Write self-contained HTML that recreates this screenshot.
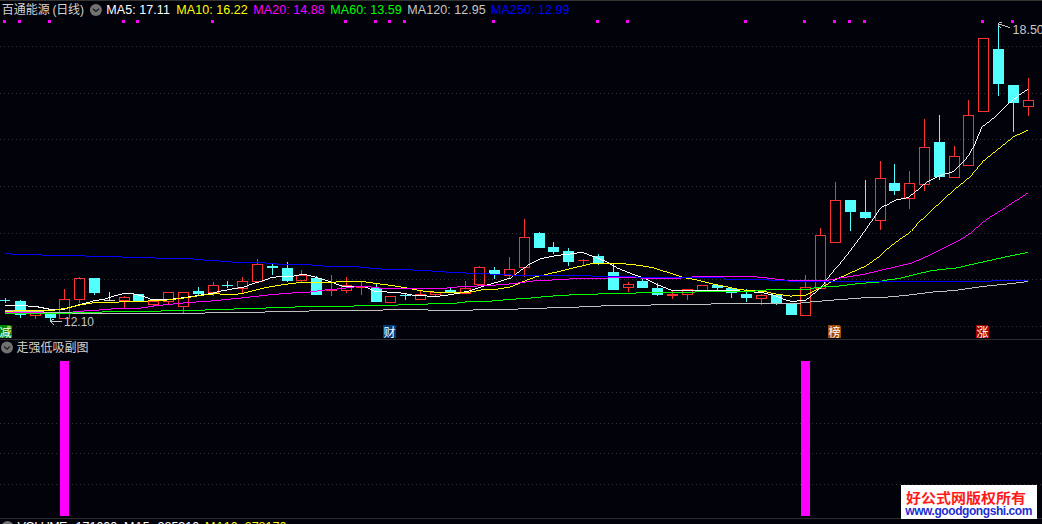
<!DOCTYPE html>
<html><head><meta charset="utf-8"><title>chart</title>
<style>
html,body{margin:0;padding:0;background:#02020b;}
body{width:1042px;height:524px;overflow:hidden;position:relative;font-family:"Liberation Sans","Noto Sans CJK SC",sans-serif;}
.t{position:absolute;white-space:nowrap;line-height:1;font-size:12.5px;}
.cj{font-size:12px;}
.lb{position:absolute;width:13px;height:13px;top:325px;color:#fff;font-size:12px;line-height:13px;text-align:center;font-family:"Noto Sans CJK SC","WenQuanYi Zen Hei",sans-serif;}
</style></head><body>
<svg width="1042" height="524" viewBox="0 0 1042 524" style="position:absolute;left:0;top:0" shape-rendering="crispEdges">
<rect width="1042" height="524" fill="#02020b"/>
<rect x="0" y="0" width="1042" height="1" fill="#343432"/>
<defs><pattern id="dot" width="4" height="1" patternUnits="userSpaceOnUse"><rect width="1" height="1" fill="#353535"/></pattern></defs>
<rect x="0" y="46" width="1042" height="1" fill="url(#dot)"/>
<rect x="0" y="93" width="1042" height="1" fill="url(#dot)"/>
<rect x="0" y="139" width="1042" height="1" fill="url(#dot)"/>
<rect x="0" y="186" width="1042" height="1" fill="url(#dot)"/>
<rect x="0" y="233" width="1042" height="1" fill="url(#dot)"/>
<rect x="0" y="279" width="1042" height="1" fill="url(#dot)"/>
<rect x="0" y="326" width="1042" height="1" fill="url(#dot)"/>
<rect x="0" y="392" width="1042" height="1" fill="url(#dot)"/>
<rect x="0" y="423" width="1042" height="1" fill="url(#dot)"/>
<rect x="0" y="453" width="1042" height="1" fill="url(#dot)"/>
<rect x="0" y="484" width="1042" height="1" fill="url(#dot)"/>
<rect x="0" y="339" width="1042" height="1" fill="#2c2c2c"/>
<rect x="0" y="518" width="1042" height="1" fill="#2c2c2c"/>
<rect x="3" y="20" width="3" height="3" fill="#ff00ff"/>
<rect x="18" y="20" width="3" height="3" fill="#ff00ff"/>
<rect x="48" y="20" width="3" height="3" fill="#ff00ff"/>
<rect x="122" y="20" width="3" height="3" fill="#ff00ff"/>
<rect x="136" y="20" width="3" height="3" fill="#ff00ff"/>
<rect x="211" y="20" width="3" height="3" fill="#ff00ff"/>
<rect x="344" y="20" width="3" height="3" fill="#ff00ff"/>
<rect x="374" y="20" width="3" height="3" fill="#ff00ff"/>
<rect x="388" y="20" width="3" height="3" fill="#ff00ff"/>
<rect x="403" y="20" width="3" height="3" fill="#ff00ff"/>
<rect x="492" y="20" width="3" height="3" fill="#ff00ff"/>
<rect x="596" y="20" width="3" height="3" fill="#ff00ff"/>
<rect x="626" y="20" width="3" height="3" fill="#ff00ff"/>
<rect x="744" y="20" width="3" height="3" fill="#ff00ff"/>
<rect x="803" y="20" width="3" height="3" fill="#ff00ff"/>
<rect x="833" y="20" width="3" height="3" fill="#ff00ff"/>
<rect x="848" y="20" width="3" height="3" fill="#ff00ff"/>
<rect x="863" y="20" width="3" height="3" fill="#ff00ff"/>
<rect x="981" y="20" width="3" height="3" fill="#ff00ff"/>
<rect x="1011" y="20" width="3" height="3" fill="#ff00ff"/>
<rect x="5" y="298" width="1" height="5" fill="#54ffff"/>
<rect x="0" y="300" width="10" height="1" fill="#54ffff"/>
<rect x="20" y="300" width="1" height="18" fill="#54ffff"/>
<rect x="15" y="301" width="11" height="14" fill="#54ffff"/>
<rect x="35" y="316" width="1" height="3" fill="#ff3232"/>
<rect x="30.5" y="312.5" width="10" height="3" fill="none" stroke="#ff3232" stroke-width="1"/>
<rect x="50" y="314" width="1" height="7" fill="#54ffff"/>
<rect x="45" y="314" width="11" height="4" fill="#54ffff"/>
<rect x="64" y="289" width="1" height="10" fill="#ff3232"/>
<rect x="59.5" y="299.5" width="10" height="19" fill="none" stroke="#ff3232" stroke-width="1"/>
<rect x="79" y="277" width="1" height="1" fill="#ff3232"/>
<rect x="79" y="300" width="1" height="3" fill="#ff3232"/>
<rect x="74.5" y="278.5" width="10" height="21" fill="none" stroke="#ff3232" stroke-width="1"/>
<rect x="94" y="278" width="1" height="17" fill="#54ffff"/>
<rect x="89" y="278" width="11" height="15" fill="#54ffff"/>
<rect x="109" y="292" width="1" height="9" fill="#d8d8d8"/>
<rect x="104" y="300" width="11" height="1" fill="#d8d8d8"/>
<rect x="124" y="296" width="1" height="1" fill="#ff3232"/>
<rect x="124" y="301" width="1" height="7" fill="#ff3232"/>
<rect x="119.5" y="297.5" width="10" height="3" fill="none" stroke="#ff3232" stroke-width="1"/>
<rect x="138" y="294" width="1" height="7" fill="#54ffff"/>
<rect x="133" y="294" width="11" height="7" fill="#54ffff"/>
<rect x="153" y="305" width="1" height="1" fill="#ff3232"/>
<rect x="148.5" y="301.5" width="10" height="3" fill="none" stroke="#ff3232" stroke-width="1"/>
<rect x="168" y="302" width="1" height="2" fill="#ff3232"/>
<rect x="163.5" y="292.5" width="10" height="9" fill="none" stroke="#ff3232" stroke-width="1"/>
<rect x="183" y="307" width="1" height="6" fill="#ff3232"/>
<rect x="178.5" y="292.5" width="10" height="14" fill="none" stroke="#ff3232" stroke-width="1"/>
<rect x="198" y="287" width="1" height="8" fill="#54ffff"/>
<rect x="193" y="291" width="11" height="3" fill="#54ffff"/>
<rect x="213" y="282" width="1" height="3" fill="#ff3232"/>
<rect x="213" y="293" width="1" height="3" fill="#ff3232"/>
<rect x="208.5" y="285.5" width="10" height="7" fill="none" stroke="#ff3232" stroke-width="1"/>
<rect x="227" y="281" width="1" height="7" fill="#54ffff"/>
<rect x="222" y="285" width="11" height="1" fill="#54ffff"/>
<rect x="242" y="277" width="1" height="4" fill="#ff3232"/>
<rect x="242" y="289" width="1" height="4" fill="#ff3232"/>
<rect x="237.5" y="281.5" width="10" height="7" fill="none" stroke="#ff3232" stroke-width="1"/>
<rect x="257" y="259" width="1" height="5" fill="#ff3232"/>
<rect x="252.5" y="264.5" width="10" height="17" fill="none" stroke="#ff3232" stroke-width="1"/>
<rect x="272" y="264" width="1" height="11" fill="#54ffff"/>
<rect x="267" y="266" width="11" height="2" fill="#54ffff"/>
<rect x="287" y="262" width="1" height="20" fill="#54ffff"/>
<rect x="282" y="268" width="11" height="13" fill="#54ffff"/>
<rect x="301" y="270" width="1" height="5" fill="#ff3232"/>
<rect x="301" y="281" width="1" height="1" fill="#ff3232"/>
<rect x="296.5" y="275.5" width="10" height="5" fill="none" stroke="#ff3232" stroke-width="1"/>
<rect x="316" y="276" width="1" height="19" fill="#54ffff"/>
<rect x="311" y="278" width="11" height="17" fill="#54ffff"/>
<rect x="331" y="275" width="1" height="21" fill="#ff3232"/>
<rect x="326" y="290" width="11" height="1" fill="#ff3232"/>
<rect x="346" y="277" width="1" height="8" fill="#ff3232"/>
<rect x="346" y="291" width="1" height="2" fill="#ff3232"/>
<rect x="341.5" y="285.5" width="10" height="5" fill="none" stroke="#ff3232" stroke-width="1"/>
<rect x="361" y="282" width="1" height="13" fill="#ff3232"/>
<rect x="356" y="287" width="11" height="1" fill="#ff3232"/>
<rect x="376" y="284" width="1" height="18" fill="#54ffff"/>
<rect x="371" y="288" width="11" height="14" fill="#54ffff"/>
<rect x="385.5" y="296.5" width="10" height="6" fill="none" stroke="#ff3232" stroke-width="1"/>
<rect x="405" y="294" width="1" height="6" fill="#54ffff"/>
<rect x="400" y="295" width="11" height="1" fill="#54ffff"/>
<rect x="420" y="291" width="1" height="3" fill="#ff3232"/>
<rect x="415.5" y="294.5" width="10" height="5" fill="none" stroke="#ff3232" stroke-width="1"/>
<rect x="435" y="295" width="1" height="1" fill="#ff3232"/>
<rect x="430.5" y="292.5" width="10" height="2" fill="none" stroke="#ff3232" stroke-width="1"/>
<rect x="450" y="288" width="1" height="5" fill="#54ffff"/>
<rect x="445" y="290" width="11" height="2" fill="#54ffff"/>
<rect x="465" y="281" width="1" height="7" fill="#ff3232"/>
<rect x="460.5" y="288.5" width="10" height="5" fill="none" stroke="#ff3232" stroke-width="1"/>
<rect x="479" y="266" width="1" height="1" fill="#ff3232"/>
<rect x="479" y="285" width="1" height="1" fill="#ff3232"/>
<rect x="474.5" y="267.5" width="10" height="17" fill="none" stroke="#ff3232" stroke-width="1"/>
<rect x="494" y="267" width="1" height="12" fill="#54ffff"/>
<rect x="489" y="270" width="11" height="4" fill="#54ffff"/>
<rect x="509" y="257" width="1" height="12" fill="#ff3232"/>
<rect x="509" y="276" width="1" height="2" fill="#ff3232"/>
<rect x="504.5" y="269.5" width="10" height="6" fill="none" stroke="#ff3232" stroke-width="1"/>
<rect x="524" y="219" width="1" height="18" fill="#ff3232"/>
<rect x="524" y="268" width="1" height="9" fill="#ff3232"/>
<rect x="519.5" y="237.5" width="10" height="30" fill="none" stroke="#ff3232" stroke-width="1"/>
<rect x="539" y="232" width="1" height="16" fill="#54ffff"/>
<rect x="534" y="233" width="11" height="15" fill="#54ffff"/>
<rect x="553" y="242" width="1" height="12" fill="#54ffff"/>
<rect x="548" y="247" width="11" height="5" fill="#54ffff"/>
<rect x="568" y="248" width="1" height="18" fill="#54ffff"/>
<rect x="563" y="251" width="11" height="11" fill="#54ffff"/>
<rect x="583" y="259" width="1" height="6" fill="#ff3232"/>
<rect x="578" y="260" width="11" height="1" fill="#ff3232"/>
<rect x="598" y="254" width="1" height="11" fill="#54ffff"/>
<rect x="593" y="256" width="11" height="7" fill="#54ffff"/>
<rect x="613" y="264" width="1" height="26" fill="#54ffff"/>
<rect x="608" y="272" width="11" height="18" fill="#54ffff"/>
<rect x="628" y="282" width="1" height="2" fill="#ff3232"/>
<rect x="628" y="288" width="1" height="4" fill="#ff3232"/>
<rect x="623.5" y="284.5" width="10" height="3" fill="none" stroke="#ff3232" stroke-width="1"/>
<rect x="642" y="277" width="1" height="11" fill="#54ffff"/>
<rect x="637" y="281" width="11" height="7" fill="#54ffff"/>
<rect x="657" y="283" width="1" height="13" fill="#54ffff"/>
<rect x="652" y="288" width="11" height="7" fill="#54ffff"/>
<rect x="672" y="291" width="1" height="8" fill="#ff3232"/>
<rect x="667" y="294" width="11" height="2" fill="#ff3232"/>
<rect x="687" y="295" width="1" height="5" fill="#ff3232"/>
<rect x="682.5" y="289.5" width="10" height="5" fill="none" stroke="#ff3232" stroke-width="1"/>
<rect x="697.5" y="285.5" width="10" height="5" fill="none" stroke="#ff3232" stroke-width="1"/>
<rect x="717" y="285" width="1" height="5" fill="#54ffff"/>
<rect x="712" y="285" width="11" height="3" fill="#54ffff"/>
<rect x="731" y="288" width="1" height="10" fill="#54ffff"/>
<rect x="726" y="288" width="11" height="5" fill="#54ffff"/>
<rect x="746" y="289" width="1" height="13" fill="#54ffff"/>
<rect x="741" y="294" width="11" height="4" fill="#54ffff"/>
<rect x="761" y="294" width="1" height="1" fill="#ff3232"/>
<rect x="761" y="299" width="1" height="6" fill="#ff3232"/>
<rect x="756.5" y="295.5" width="10" height="3" fill="none" stroke="#ff3232" stroke-width="1"/>
<rect x="776" y="295" width="1" height="10" fill="#54ffff"/>
<rect x="771" y="295" width="11" height="8" fill="#54ffff"/>
<rect x="791" y="304" width="1" height="11" fill="#54ffff"/>
<rect x="786" y="304" width="11" height="11" fill="#54ffff"/>
<rect x="805" y="275" width="1" height="12" fill="#ff3232"/>
<rect x="800.5" y="287.5" width="10" height="28" fill="none" stroke="#ff3232" stroke-width="1"/>
<rect x="820" y="228" width="1" height="7" fill="#ff3232"/>
<rect x="815.5" y="235.5" width="10" height="53" fill="none" stroke="#ff3232" stroke-width="1"/>
<rect x="835" y="182" width="1" height="18" fill="#ff3232"/>
<rect x="830.5" y="200.5" width="10" height="42" fill="none" stroke="#ff3232" stroke-width="1"/>
<rect x="850" y="200" width="1" height="31" fill="#54ffff"/>
<rect x="845" y="200" width="11" height="12" fill="#54ffff"/>
<rect x="865" y="180" width="1" height="39" fill="#54ffff"/>
<rect x="860" y="212" width="11" height="6" fill="#54ffff"/>
<rect x="880" y="161" width="1" height="17" fill="#ff3232"/>
<rect x="880" y="221" width="1" height="9" fill="#ff3232"/>
<rect x="875.5" y="178.5" width="10" height="42" fill="none" stroke="#ff3232" stroke-width="1"/>
<rect x="894" y="164" width="1" height="31" fill="#54ffff"/>
<rect x="889" y="183" width="11" height="8" fill="#54ffff"/>
<rect x="909" y="171" width="1" height="12" fill="#ff3232"/>
<rect x="909" y="199" width="1" height="10" fill="#ff3232"/>
<rect x="904.5" y="183.5" width="10" height="15" fill="none" stroke="#ff3232" stroke-width="1"/>
<rect x="924" y="119" width="1" height="28" fill="#ff3232"/>
<rect x="924" y="185" width="1" height="6" fill="#ff3232"/>
<rect x="919.5" y="147.5" width="10" height="37" fill="none" stroke="#ff3232" stroke-width="1"/>
<rect x="939" y="115" width="1" height="65" fill="#54ffff"/>
<rect x="934" y="142" width="11" height="35" fill="#54ffff"/>
<rect x="954" y="146" width="1" height="10" fill="#ff3232"/>
<rect x="949.5" y="156.5" width="10" height="21" fill="none" stroke="#ff3232" stroke-width="1"/>
<rect x="968" y="100" width="1" height="15" fill="#ff3232"/>
<rect x="963.5" y="115.5" width="10" height="50" fill="none" stroke="#ff3232" stroke-width="1"/>
<rect x="978.5" y="38.5" width="10" height="73" fill="none" stroke="#ff3232" stroke-width="1"/>
<rect x="998" y="24" width="1" height="72" fill="#54ffff"/>
<rect x="993" y="49" width="11" height="35" fill="#54ffff"/>
<rect x="1013" y="85" width="1" height="47" fill="#54ffff"/>
<rect x="1008" y="85" width="11" height="18" fill="#54ffff"/>
<rect x="1028" y="78" width="1" height="22" fill="#ff3232"/>
<rect x="1028" y="107" width="1" height="9" fill="#ff3232"/>
<rect x="1023.5" y="100.5" width="10" height="6" fill="none" stroke="#ff3232" stroke-width="1"/>
<path d="M1027 89.5h1M1025 90.5h2M1024 91.5h1M1022 92.5h2M1021 93.5h1M1019 94.5h2M1018 95.5h1M1017 96.5h1M1016 97.5h1M1014 98.5h2M1013 99.5h1M1012 100.5h1M1011 101.5h1M1009 102.5h2M1008 103.5h1M1007 104.5h1M1006 105.5h1M1005 106.5h1M1004 107.5h1M1003 108.5h1M1002 109.5h1M1001 110.5h1M1000 111.5h1M999 112.5h1M998 113.5h1M997 114.5h1M996 115.5h1M995 116.5h1M994 117.5h1M992 118.5h2M991 119.5h1M990 120.5h1M989 121.5h1M987 122.5h2M986 123.5h1M985 124.5h1M983 125.5h2M982 126.5h1M981 127.5h1M981 128.5h1M980 129.5h1M980 130.5h1M980 131.5h1M979 132.5h1M979 133.5h1M978 134.5h1M978 135.5h1M977 136.5h1M977 137.5h1M977 138.5h1M976 139.5h1M976 140.5h1M975 141.5h1M975 142.5h1M975 143.5h1M974 144.5h1M974 145.5h1M973 146.5h1M973 147.5h1M972 148.5h1M971 149.5h1M971 150.5h1M970 151.5h1M970 152.5h1M969 153.5h1M969 154.5h1M968 155.5h1M967 156.5h1M966 157.5h1M966 158.5h1M965 159.5h1M964 160.5h1M963 161.5h1M962 162.5h1M961 163.5h1M960 164.5h1M959 165.5h1M958 166.5h1M957 167.5h1M956 168.5h1M955 169.5h1M954 170.5h1M952 171.5h2M949 172.5h3M945 173.5h4M942 174.5h3M939 175.5h3M937 176.5h2M935 177.5h2M933 178.5h2M931 179.5h2M929 180.5h2M927 181.5h2M926 182.5h1M925 183.5h1M923 184.5h2M922 185.5h1M921 186.5h1M920 187.5h1M919 188.5h1M918 189.5h1M916 190.5h2M915 191.5h1M914 192.5h1M913 193.5h1M911 194.5h2M910 195.5h1M909 196.5h1M906 197.5h3M901 198.5h5M896 199.5h5M894 200.5h2M892 201.5h2M890 202.5h2M889 203.5h1M887 204.5h2M884 205.5h3M882 206.5h2M881 207.5h1M880 208.5h1M879 209.5h1M878 210.5h1M878 211.5h1M877 212.5h1M876 213.5h1M876 214.5h1M875 215.5h1M874 216.5h1M874 217.5h1M873 218.5h1M872 219.5h1M872 220.5h1M871 221.5h1M870 222.5h1M869 223.5h1M869 224.5h1M868 225.5h1M867 226.5h1M867 227.5h1M866 228.5h1M865 229.5h1M865 230.5h1M864 231.5h1M863 232.5h1M862 233.5h1M862 234.5h1M861 235.5h1M860 236.5h1M860 237.5h1M859 238.5h1M858 239.5h1M857 240.5h1M857 241.5h1M856 242.5h1M855 243.5h1M854 244.5h1M854 245.5h1M853 246.5h1M852 247.5h1M851 248.5h1M851 249.5h1M850 250.5h1M849 251.5h1M577 252.5h7M848 252.5h1M570 253.5h7M584 253.5h3M848 253.5h1M561 254.5h9M587 254.5h2M847 254.5h1M554 255.5h7M589 255.5h3M846 255.5h1M549 256.5h5M592 256.5h3M845 256.5h1M544 257.5h5M595 257.5h2M844 257.5h1M540 258.5h4M597 258.5h3M844 258.5h1M538 259.5h2M600 259.5h2M843 259.5h1M536 260.5h2M602 260.5h3M842 260.5h1M534 261.5h2M605 261.5h2M841 261.5h1M532 262.5h2M607 262.5h2M840 262.5h1M530 263.5h2M609 263.5h1M840 263.5h1M528 264.5h2M610 264.5h2M839 264.5h1M527 265.5h1M612 265.5h2M838 265.5h1M526 266.5h1M614 266.5h2M837 266.5h1M524 267.5h2M616 267.5h1M836 267.5h1M523 268.5h1M617 268.5h3M835 268.5h1M521 269.5h2M620 269.5h2M834 269.5h1M520 270.5h1M622 270.5h3M833 270.5h1M519 271.5h1M625 271.5h2M833 271.5h1M517 272.5h2M627 272.5h3M832 272.5h1M516 273.5h1M630 273.5h2M831 273.5h1M299 274.5h8M515 274.5h1M632 274.5h3M830 274.5h1M294 275.5h5M307 275.5h4M513 275.5h2M635 275.5h3M829 275.5h1M276 276.5h18M311 276.5h4M512 276.5h1M638 276.5h3M829 276.5h1M270 277.5h6M315 277.5h3M511 277.5h1M641 277.5h3M828 277.5h1M268 278.5h2M318 278.5h4M507 278.5h4M644 278.5h2M827 278.5h1M265 279.5h3M322 279.5h3M504 279.5h3M646 279.5h2M826 279.5h1M262 280.5h3M325 280.5h3M501 280.5h3M648 280.5h2M826 280.5h1M259 281.5h3M328 281.5h3M498 281.5h3M650 281.5h2M825 281.5h1M255 282.5h4M331 282.5h3M494 282.5h4M652 282.5h2M824 282.5h1M252 283.5h3M334 283.5h2M491 283.5h3M654 283.5h2M824 283.5h1M249 284.5h3M336 284.5h3M487 284.5h4M656 284.5h2M823 284.5h1M247 285.5h2M339 285.5h3M484 285.5h3M658 285.5h3M822 285.5h1M244 286.5h3M342 286.5h23M481 286.5h3M661 286.5h2M821 286.5h1M238 287.5h6M365 287.5h3M478 287.5h3M663 287.5h3M821 287.5h1M232 288.5h6M368 288.5h2M475 288.5h3M666 288.5h2M819 288.5h2M227 289.5h5M370 289.5h2M472 289.5h3M668 289.5h3M818 289.5h1M221 290.5h6M372 290.5h2M469 290.5h3M671 290.5h69M817 290.5h1M217 291.5h4M374 291.5h13M464 291.5h5M740 291.5h14M816 291.5h1M213 292.5h4M387 292.5h14M460 292.5h4M754 292.5h10M815 292.5h1M122 293.5h12M208 293.5h5M401 293.5h6M454 293.5h6M764 293.5h4M813 293.5h2M118 294.5h4M134 294.5h4M201 294.5h7M407 294.5h5M448 294.5h6M768 294.5h5M812 294.5h1M114 295.5h4M138 295.5h4M195 295.5h6M412 295.5h15M440 295.5h8M773 295.5h3M811 295.5h1M111 296.5h3M142 296.5h3M188 296.5h7M427 296.5h13M776 296.5h2M810 296.5h1M108 297.5h3M145 297.5h3M181 297.5h7M778 297.5h3M809 297.5h1M105 298.5h3M148 298.5h2M173 298.5h8M781 298.5h2M807 298.5h2M99 299.5h6M150 299.5h23M783 299.5h3M806 299.5h1M93 300.5h6M786 300.5h4M797 300.5h9M90 301.5h3M790 301.5h7M86 302.5h4M82 303.5h4M78 304.5h4M5 305.5h23M75 305.5h3M28 306.5h11M71 306.5h4M38 307.5h6M68 307.5h3M43 308.5h6M65 308.5h3M48 309.5h17" fill="none" stroke="#ffffff" stroke-width="1"/>
<path d="M1026 130.5h2M1024 131.5h2M1022 132.5h2M1020 133.5h2M1017 134.5h3M1015 135.5h2M1013 136.5h2M1012 137.5h1M1011 138.5h1M1010 139.5h1M1008 140.5h2M1007 141.5h1M1006 142.5h1M1005 143.5h1M1003 144.5h2M1002 145.5h1M1001 146.5h1M1000 147.5h1M998 148.5h2M997 149.5h1M996 150.5h1M995 151.5h1M993 152.5h2M992 153.5h1M991 154.5h1M990 155.5h1M988 156.5h2M987 157.5h1M986 158.5h1M985 159.5h1M983 160.5h2M982 161.5h1M982 162.5h1M981 163.5h1M980 164.5h1M979 165.5h1M978 166.5h1M977 167.5h1M977 168.5h1M976 169.5h1M975 170.5h1M974 171.5h1M973 172.5h1M972 173.5h1M972 174.5h1M971 175.5h1M970 176.5h1M969 177.5h1M967 178.5h2M966 179.5h1M965 180.5h1M964 181.5h1M963 182.5h1M961 183.5h2M960 184.5h1M959 185.5h1M958 186.5h1M956 187.5h2M955 188.5h1M954 189.5h1M953 190.5h1M952 191.5h1M951 192.5h1M950 193.5h1M948 194.5h2M947 195.5h1M946 196.5h1M945 197.5h1M944 198.5h1M943 199.5h1M942 200.5h1M941 201.5h1M940 202.5h1M939 203.5h1M938 204.5h1M936 205.5h2M935 206.5h1M934 207.5h1M933 208.5h1M932 209.5h1M931 210.5h1M930 211.5h1M929 212.5h1M928 213.5h1M927 214.5h1M926 215.5h1M925 216.5h1M924 217.5h1M923 218.5h1M921 219.5h2M920 220.5h1M919 221.5h1M918 222.5h1M917 223.5h1M916 224.5h1M916 225.5h1M915 226.5h1M914 227.5h1M913 228.5h1M912 229.5h1M912 230.5h1M910 231.5h1M909 232.5h1M908 233.5h1M906 234.5h2M905 235.5h1M903 236.5h2M902 237.5h1M900 238.5h2M899 239.5h1M898 240.5h1M896 241.5h2M895 242.5h1M894 243.5h1M892 244.5h2M891 245.5h1M890 246.5h1M889 247.5h1M887 248.5h2M886 249.5h1M885 250.5h1M884 251.5h1M883 252.5h1M882 253.5h1M881 254.5h1M880 255.5h1M879 256.5h1M877 257.5h2M876 258.5h1M874 259.5h2M873 260.5h1M872 261.5h1M870 262.5h2M590 263.5h36M869 263.5h1M586 264.5h4M626 264.5h10M867 264.5h2M582 265.5h4M636 265.5h7M866 265.5h1M577 266.5h5M643 266.5h6M864 266.5h2M573 267.5h4M649 267.5h5M861 267.5h3M569 268.5h4M654 268.5h3M859 268.5h2M565 269.5h4M657 269.5h3M857 269.5h2M561 270.5h4M660 270.5h3M855 270.5h2M557 271.5h4M663 271.5h4M852 271.5h3M552 272.5h5M667 272.5h3M850 272.5h2M548 273.5h4M670 273.5h3M848 273.5h2M544 274.5h4M673 274.5h3M846 274.5h2M539 275.5h5M676 275.5h3M844 275.5h2M535 276.5h4M679 276.5h3M841 276.5h3M533 277.5h2M682 277.5h4M839 277.5h2M530 278.5h3M686 278.5h6M837 278.5h2M527 279.5h3M692 279.5h5M835 279.5h2M525 280.5h2M697 280.5h4M833 280.5h2M336 281.5h30M522 281.5h3M701 281.5h4M831 281.5h2M296 282.5h40M366 282.5h7M520 282.5h2M705 282.5h4M829 282.5h2M288 283.5h8M373 283.5h7M518 283.5h2M709 283.5h4M828 283.5h1M281 284.5h7M380 284.5h8M515 284.5h3M713 284.5h5M826 284.5h2M275 285.5h6M388 285.5h7M513 285.5h2M718 285.5h5M824 285.5h2M269 286.5h6M395 286.5h6M510 286.5h3M723 286.5h5M822 286.5h2M264 287.5h5M401 287.5h6M504 287.5h6M728 287.5h4M820 287.5h2M260 288.5h4M407 288.5h5M498 288.5h6M732 288.5h5M818 288.5h2M256 289.5h4M412 289.5h5M481 289.5h17M737 289.5h7M816 289.5h2M252 290.5h4M417 290.5h6M476 290.5h5M744 290.5h14M814 290.5h2M248 291.5h4M423 291.5h11M470 291.5h6M758 291.5h9M812 291.5h2M244 292.5h4M434 292.5h36M767 292.5h4M810 292.5h2M213 293.5h7M238 293.5h6M771 293.5h5M808 293.5h2M204 294.5h9M220 294.5h18M776 294.5h7M806 294.5h2M197 295.5h7M783 295.5h7M792 295.5h14M191 296.5h6M790 296.5h2M184 297.5h7M176 298.5h8M167 299.5h9M148 300.5h19M119 301.5h29M92 302.5h27M86 303.5h6M80 304.5h6M76 305.5h4M72 306.5h4M67 307.5h5M61 308.5h6M55 309.5h6M13 310.5h42M5 311.5h8" fill="none" stroke="#ffff00" stroke-width="1"/>
<path d="M1026 193.5h2M1025 194.5h1M1023 195.5h2M1022 196.5h1M1020 197.5h2M1019 198.5h1M1017 199.5h2M1015 200.5h2M1014 201.5h1M1012 202.5h2M1011 203.5h1M1009 204.5h2M1008 205.5h1M1006 206.5h2M1005 207.5h1M1003 208.5h2M1002 209.5h1M1000 210.5h2M998 211.5h2M997 212.5h1M995 213.5h2M994 214.5h1M992 215.5h2M990 216.5h2M989 217.5h1M987 218.5h2M986 219.5h1M985 220.5h1M983 221.5h2M982 222.5h1M981 223.5h1M980 224.5h1M979 225.5h1M978 226.5h1M976 227.5h2M975 228.5h1M974 229.5h1M973 230.5h1M972 231.5h1M971 232.5h1M969 233.5h2M968 234.5h1M966 235.5h2M965 236.5h1M963 237.5h2M961 238.5h2M960 239.5h1M958 240.5h2M956 241.5h2M954 242.5h2M952 243.5h2M950 244.5h2M948 245.5h2M946 246.5h2M944 247.5h2M942 248.5h2M940 249.5h2M938 250.5h2M936 251.5h2M934 252.5h2M932 253.5h2M930 254.5h2M928 255.5h2M925 256.5h3M923 257.5h2M921 258.5h2M919 259.5h2M916 260.5h3M914 261.5h2M912 262.5h2M908 263.5h4M903 264.5h5M899 265.5h4M895 266.5h4M891 267.5h4M886 268.5h5M882 269.5h4M878 270.5h4M874 271.5h4M869 272.5h5M865 273.5h4M860 274.5h5M853 275.5h7M692 276.5h65M847 276.5h6M608 277.5h33M681 277.5h11M757 277.5h10M840 277.5h7M569 278.5h39M641 278.5h40M767 278.5h8M835 278.5h5M552 279.5h17M775 279.5h9M829 279.5h6M533 280.5h19M784 280.5h45M526 281.5h7M518 282.5h8M509 283.5h9M496 284.5h13M477 285.5h19M354 286.5h17M457 286.5h20M346 287.5h8M371 287.5h8M447 287.5h10M337 288.5h9M379 288.5h68M325 289.5h12M317 290.5h8M310 291.5h7M292 292.5h18M279 293.5h13M268 294.5h11M259 295.5h9M250 296.5h9M241 297.5h9M231 298.5h10M221 299.5h10M211 300.5h10M196 301.5h15M183 302.5h13M173 303.5h10M163 304.5h10M154 305.5h9M148 306.5h6M141 307.5h7M111 308.5h30M99 309.5h12M84 310.5h15M73 311.5h11M5 312.5h68" fill="none" stroke="#ff00ff" stroke-width="1"/>
<path d="M1025 252.5h3M1020 253.5h5M1015 254.5h5M1010 255.5h5M1005 256.5h5M1001 257.5h4M996 258.5h5M992 259.5h4M987 260.5h5M983 261.5h4M978 262.5h5M974 263.5h4M969 264.5h5M965 265.5h4M961 266.5h4M956 267.5h5M946 268.5h10M937 269.5h9M930 270.5h7M926 271.5h4M921 272.5h5M917 273.5h4M913 274.5h4M909 275.5h4M905 276.5h4M901 277.5h4M895 278.5h6M887 279.5h8M882 280.5h5M879 281.5h3M866 282.5h13M855 283.5h11M847 284.5h8M839 285.5h8M822 286.5h17M814 287.5h8M810 288.5h4M766 289.5h44M755 290.5h11M695 291.5h60M636 292.5h59M598 293.5h38M569 294.5h29M553 295.5h16M541 296.5h12M531 297.5h10M516 298.5h15M503 299.5h13M492 300.5h11M465 301.5h27M457 302.5h8M428 303.5h29M398 304.5h30M354 305.5h44M295 306.5h59M266 307.5h29M234 308.5h32M205 309.5h29M161 310.5h44M102 311.5h59M72 312.5h30M5 313.5h67" fill="none" stroke="#00ff00" stroke-width="1"/>
<path d="M1024 281.5h4M1016 282.5h8M1007 283.5h9M997 284.5h10M987 285.5h10M979 286.5h8M972 287.5h7M965 288.5h7M958 289.5h7M947 290.5h11M933 291.5h14M925 292.5h8M917 293.5h8M909 294.5h8M899 295.5h10M888 296.5h11M861 297.5h27M848 298.5h13M834 299.5h14M822 300.5h12M810 301.5h12M801 302.5h9M711 303.5h90M651 304.5h60M601 305.5h50M579 306.5h22M547 307.5h32M518 308.5h29M383 309.5h45M473 309.5h45M5 310.5h9M309 310.5h74M428 310.5h45M13 311.5h31M265 311.5h44M43 312.5h29M205 312.5h60M72 313.5h133" fill="none" stroke="#c0c0c0" stroke-width="1"/>
<path d="M5 253.5h6M11 254.5h31M42 255.5h44M86 256.5h36M122 257.5h33M155 258.5h38M193 259.5h11M204 260.5h15M219 261.5h13M232 262.5h33M265 263.5h12M277 264.5h35M312 265.5h11M323 266.5h36M359 267.5h10M369 268.5h12M381 269.5h32M413 270.5h19M432 271.5h14M446 272.5h20M466 273.5h24M490 274.5h21M511 275.5h80M591 276.5h45M636 277.5h88M724 278.5h1M725 279.5h44M769 280.5h19M991 280.5h37M788 281.5h203" fill="none" stroke="#0000ff" stroke-width="1"/>
<rect x="60" y="361" width="9" height="155" fill="#ff00ff"/>
<rect x="801" y="361" width="9" height="155" fill="#ff00ff"/>
<rect x="-1" y="325" width="13" height="13" fill="#008800"/>
<rect x="11" y="325" width="1" height="1" fill="#02020b"/>
<rect x="383" y="325" width="13" height="13" fill="#003a7a"/>
<rect x="395" y="325" width="1" height="1" fill="#02020b"/>
<rect x="828" y="325" width="13" height="13" fill="#a34a00"/>
<rect x="840" y="325" width="1" height="1" fill="#02020b"/>
<rect x="976" y="325" width="13" height="13" fill="#a00000"/>
<rect x="988" y="325" width="1" height="1" fill="#02020b"/>
<g stroke="#c8c8c8" stroke-width="1" fill="none">
<path d="M52 319.5h2M51 320.5h1M50 321.5h12M51 322.5h1M52 323.5h1M53 324.5h1"/>
<path d="M999 22.5h3M998 23.5h1M998 24.5h4M998 25.5h1M1002 25.5h3M1005 26.5h3M1008 27.5h2M999 26.5h1M1000 27.5h1"/>
</g>
<rect x="901" y="485" width="136" height="34" fill="#ffffff"/>
<g shape-rendering="auto"><circle cx="95.9" cy="9.9" r="6" fill="#727272"/><path d="M92.9 8.8 L95.9 11.5 L98.9 8.8" fill="none" stroke="#15151c" stroke-width="1.2"/></g>
<g shape-rendering="auto"><circle cx="7" cy="347.5" r="6" fill="#727272"/><path d="M4 346.4 L7 349.1 L10 346.4" fill="none" stroke="#15151c" stroke-width="1.2"/></g>
<g shape-rendering="auto"><circle cx="7.5" cy="527" r="6" fill="#727272"/><path d="M4.5 525.9 L7.5 528.6 L10.5 525.9" fill="none" stroke="#15151c" stroke-width="1.2"/></g>
</svg>
<div class="t cj" style="left:1.8px;top:3.5px;color:#d2d2d2">百通能源</div>
<div class="t cj" style="left:52.5px;top:3.5px;color:#d2d2d2;letter-spacing:-0.2px">(日线)</div>
<div class="t" id="m5" style="left:106.3px;top:4px;letter-spacing:0.06px;color:#ffffff">MA5: 17.11</div>
<div class="t" id="m10" style="left:176.3px;top:4px;letter-spacing:0.06px;color:#ffff00">MA10: 16.22</div>
<div class="t" id="m20" style="left:253.3px;top:4px;letter-spacing:0.06px;color:#ff00ff">MA20: 14.88</div>
<div class="t" id="m60" style="left:330.3px;top:4px;letter-spacing:0.06px;color:#00ff00">MA60: 13.59</div>
<div class="t" id="m120" style="left:407.3px;top:4px;letter-spacing:0.06px;color:#c8c8c8">MA120: 12.95</div>
<div class="t" id="m250" style="left:491px;top:4px;letter-spacing:0.06px;color:#0000ff">MA250: 12.99</div>
<div class="t" id="p1" style="left:64px;top:316px;color:#c8c8c8;font-size:12px">12.10</div>
<div class="t" id="p2" style="left:1012.5px;top:23.5px;color:#c8c8c8;font-size:12.5px">18.50</div>
<div class="t cj" id="sub" style="left:16.5px;top:342px;color:#d2d2d2">走强低吸副图</div>
<div class="lb" style="left:-1px">减</div>
<div class="lb" style="left:383px">财</div>
<div class="lb" style="left:828px">榜</div>
<div class="lb" style="left:976px">涨</div>
<div class="t" style="left:17.5px;top:521px;color:#ffffff;letter-spacing:-0.6px">VOLUME:</div>
<div class="t" style="left:75.5px;top:521px;color:#ffffff">171600</div>
<div class="t" style="left:124px;top:521px;color:#ffffff">MA5:</div>
<div class="t" style="left:157.5px;top:521px;color:#ffffff">285310</div>
<div class="t" style="left:205px;top:521px;color:#ffff00">MA10:</div>
<div class="t" style="left:244.7px;top:521px;color:#ffff00">278170</div>
<div class="t" id="wm1" style="left:906px;top:491.4px;color:#ff1a1a;font-size:15px;transform:scaleY(0.91);transform-origin:0 0;font-weight:bold">好公式网版权所有</div>
<div class="t" id="wm2" style="left:905.3px;top:504.6px;color:#2030d0;font-size:12px;letter-spacing:-0.43px;font-weight:bold">www.goodgongshi.com</div>
</body></html>
